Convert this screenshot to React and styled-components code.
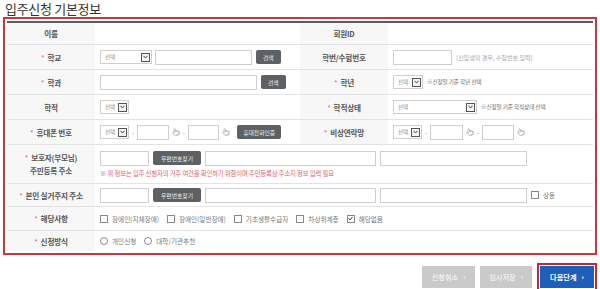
import React from "react";
import styled, { createGlobalStyle } from "styled-components";
import { Pointer } from "lucide-react";

const GlobalStyle = createGlobalStyle`
  body {
    margin: 0;
    background: #fff;
    font-family: "Noto Sans CJK KR", "Noto Sans", sans-serif;
    color: #444;
  }
`;

const Page = styled.div`
  width: 600px;
  height: 289px;
  padding: 0 3px;
  box-sizing: border-box;
  overflow: hidden;
`;

const Title = styled.h2`
  margin: 0 0 0 2px;
  height: 16px;
  line-height: 17px;
  font-size: 13px;
  font-weight: 400;
  color: #333;
  letter-spacing: -0.3px;
`;

const Frame = styled.div`
  border: 2px solid #d2323c;
  padding: 2px;
  margin-top: 1px;
`;

const Table = styled.div`
  border-top: 2px solid #5c5c5c;
`;

const Row = styled.div`
  display: grid;
  grid-template-columns: ${(p) => (p.$full ? "88px 1fr" : "88px 205px 88px 1fr")};
  height: ${(p) => p.$h}px;
  box-sizing: border-box;
  border-bottom: ${(p) => (p.$last ? "none" : "1px solid #e3e3e3")};
`;

const Label = styled.div`
  background: #f7f7f7;
  display: flex;
  flex-direction: column;
  align-items: center;
  justify-content: center;
  text-align: center;
  font-size: 7.6px;
  font-weight: 700;
  color: #555;
  line-height: 13px;
  letter-spacing: -0.2px;
`;

const Star = styled.span`
  color: #e4636b;
  margin-right: 3px;
  font-weight: 400;
`;

const Cell = styled.div`
  display: flex;
  flex-direction: ${(p) => (p.$stack ? "column" : "row")};
  justify-content: ${(p) => (p.$stack ? "center" : "flex-start")};
  align-items: ${(p) => (p.$stack ? "flex-start" : "center")};
  gap: ${(p) => p.$gap ?? 4}px;
  padding-left: 5px;
  background: #fff;
`;

const Line = styled.div`
  display: flex;
  align-items: center;
  gap: 4px;
`;

const Input = styled.div`
  width: ${(p) => p.$w}px;
  height: 15px;
  border: 1px solid #cfcfcf;
  box-sizing: border-box;
  background: #fff;
  flex: none;
`;

const SelectBox = styled.div`
  width: ${(p) => p.$w}px;
  height: 14px;
  border: 1px solid #cfcfcf;
  box-sizing: border-box;
  display: flex;
  align-items: center;
  justify-content: space-between;
  padding-left: 4px;
  font-size: 5.5px;
  color: #888;
  background: #fff;
  flex: none;
`;

const Arrow = styled.span`
  width: 9px;
  height: 9px;
  border: 1px solid #555;
  box-sizing: border-box;
  margin-right: 1px;
  display: flex;
  align-items: center;
  justify-content: center;
  background: #f4f4f4;
`;

const DarkButton = styled.span`
  height: 14px;
  padding: 0 ${(p) => p.$pad ?? 7}px;
  background: #5d6166;
  color: #eee;
  font-size: 5.8px;
  border-radius: 2px;
  display: flex;
  align-items: center;
  flex: none;
  margin-left: ${(p) => p.$ml ?? 0}px;
`;

const Hint = styled.span`
  font-size: ${(p) => p.$size ?? 5.6}px;
  color: ${(p) => p.$color ?? "#666"};
  white-space: nowrap;
  letter-spacing: -0.1px;
`;

const Dash = styled.span`
  font-size: 6px;
  color: #777;
`;

const Check = styled.span`
  width: 6px;
  height: 6px;
  border: 1px solid #888;
  border-radius: ${(p) => (p.$round ? "50%" : "0")};
  display: inline-flex;
  align-items: center;
  justify-content: center;
  flex: none;
`;

const Option = styled.span`
  display: flex;
  align-items: center;
  gap: 4px;
  font-size: 6.6px;
  color: #777;
  margin-right: ${(p) => p.$mr ?? 8}px;
  white-space: nowrap;
`;

const Actions = styled.div`
  display: flex;
  justify-content: flex-end;
  gap: 5px;
  margin-top: 11px;
  padding-right: 3px;
`;

const ActionButton = styled.span`
  width: ${(p) => p.$w}px;
  height: 22px;
  display: flex;
  align-items: center;
  justify-content: center;
  gap: 5px;
  font-size: 7.2px;
  color: #fff;
  background: ${(p) => (p.$primary ? "#1d5fb9" : "#cacaca")};
  outline: ${(p) => (p.$primary ? "2px solid #c9262f" : "none")};
  outline-offset: 1px;
  margin-left: ${(p) => (p.$primary ? 3 : 0)}px;
  font-weight: ${(p) => (p.$primary ? 700 : 400)};
`;

const Chevron = () => (
  <svg width="5" height="4" viewBox="0 0 5 4">
    <path d="M0.5 0.8 L2.5 3 L4.5 0.8" fill="none" stroke="#333" strokeWidth="0.9" />
  </svg>
);

const Select = ({ w }) => (
  <SelectBox $w={w}>
    선택
    <Arrow>
      <Chevron />
    </Arrow>
  </SelectBox>
);

const Hand = () => <Pointer size={8} strokeWidth={1.4} color="#888" />;

const Req = ({ children }) => (
  <span>
    <Star>*</Star>
    {children}
  </span>
);

const Box = ({ checked, round }) => (
  <Check $round={round}>
    {checked && (
      <svg width="5" height="5" viewBox="0 0 5 5">
        <path d="M0.6 2.4 L2 3.9 L4.5 0.8" fill="none" stroke="#333" strokeWidth="1" />
      </svg>
    )}
  </Check>
);

export default function App() {
  return (
    <Page>
      <GlobalStyle />
      <Title>입주신청 기본정보</Title>
      <Frame>
        <Table>
          <Row $h={22}>
            <Label>이름</Label>
            <Cell />
            <Label>회원ID</Label>
            <Cell />
          </Row>
          <Row $h={25}>
            <Label>
              <Req>학교</Req>
            </Label>
            <Cell $gap={3}>
              <Select w={52} />
              <Input $w={97} />
              <DarkButton $ml={1}>검색</DarkButton>
            </Cell>
            <Label>학번/수험번호</Label>
            <Cell>
              <Input $w={59} />
              <Hint $color="#aaa" $size={6.2}>(신입생의 경우, 수험번호 입력)</Hint>
            </Cell>
          </Row>
          <Row $h={25}>
            <Label>
              <Req>학과</Req>
            </Label>
            <Cell>
              <Input $w={157} />
              <DarkButton>검색</DarkButton>
            </Cell>
            <Label>
              <Req>학년</Req>
            </Label>
            <Cell>
              <Select w={30} />
              <Hint>※신청일 기준 학년 선택</Hint>
            </Cell>
          </Row>
          <Row $h={25}>
            <Label>학적</Label>
            <Cell>
              <Select w={29} />
            </Cell>
            <Label>
              <Req>학적상태</Req>
            </Label>
            <Cell>
              <Select w={84} />
              <Hint>※신청일 기준 학적상태 선택</Hint>
            </Cell>
          </Row>
          <Row $h={25}>
            <Label>
              <Req>휴대폰 번호</Req>
            </Label>
            <Cell $gap={3}>
              <Select w={29} />
              <Dash>-</Dash>
              <Input $w={32} />
              <Hand />
              <Dash>-</Dash>
              <Input $w={31} />
              <Hand />
              <DarkButton $ml={4} $pad={6}>휴대전화인증</DarkButton>
            </Cell>
            <Label>
              <Req>비상연락망</Req>
            </Label>
            <Cell $gap={3}>
              <Select w={29} />
              <Dash>-</Dash>
              <Input $w={33} />
              <Hand />
              <Dash>-</Dash>
              <Input $w={32} />
              <Hand />
            </Cell>
          </Row>
          <Row $h={39} $full>
            <Label>
              <Req>보호자(부모님)</Req>
              <span>주민등록 주소</span>
            </Label>
            <Cell $stack $gap={3}>
              <Line>
                <Input $w={49} />
                <DarkButton $pad={8}>우편번호찾기</DarkButton>
                <Input $w={171} />
                <Input $w={147} />
              </Line>
              <Hint $color="#e0626a" $size={6.3}>
                ※ 위 정보는 입주 신청자의 거주 여건을 확인하기 위함이며 주민등록상 주소지 정보 입력 필요
              </Hint>
            </Cell>
          </Row>
          <Row $h={23} $full>
            <Label>
              <Req>본인 실거주지 주소</Req>
            </Label>
            <Cell>
              <Input $w={49} />
              <DarkButton $pad={8}>우편번호찾기</DarkButton>
              <Input $w={171} />
              <Input $w={147} />
              <Option $mr={0}>
                <Box />
                상동
              </Option>
            </Cell>
          </Row>
          <Row $h={24} $full>
            <Label>
              <Req>해당사항</Req>
            </Label>
            <Cell $gap={0}>
              <Option>
                <Box />
                장애인(지체장애)
              </Option>
              <Option>
                <Box />
                장애인(일반장애)
              </Option>
              <Option>
                <Box />
                기초생활수급자
              </Option>
              <Option>
                <Box />
                차상위계층
              </Option>
              <Option>
                <Box checked />
                해당없음
              </Option>
            </Cell>
          </Row>
          <Row $h={20} $full $last>
            <Label>
              <Req>신청방식</Req>
            </Label>
            <Cell $gap={0}>
              <Option>
                <Box round />
                개인신청
              </Option>
              <Option>
                <Box round />
                대학/기관추천
              </Option>
            </Cell>
          </Row>
        </Table>
      </Frame>
      <Actions>
        <ActionButton $w={53}>
          신청취소 <span>›</span>
        </ActionButton>
        <ActionButton $w={52}>
          임시저장 <span>›</span>
        </ActionButton>
        <ActionButton $w={54} $primary>
          다음단계 <span>›</span>
        </ActionButton>
      </Actions>
    </Page>
  );
}
